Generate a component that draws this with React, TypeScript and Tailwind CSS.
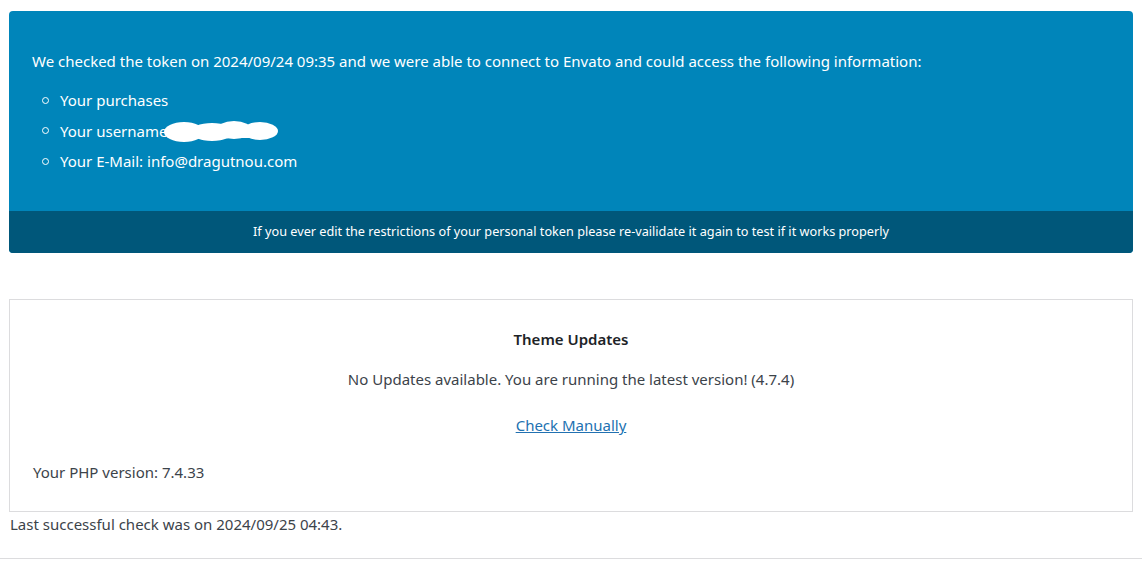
export default function App() {
  return (
    <div
      className="min-h-[565px] bg-white text-[#3c434a]"
      style={{ fontFamily: '"Noto Sans", "Open Sans", sans-serif' }}
    >
      <div className="px-[9px] pt-[11px]">
        <div className="overflow-hidden rounded-[4px] bg-[#0085ba] text-white">
          <div className="px-[23px] pb-[39px] pt-[39px]">
            <p className="text-[15px] leading-[22px]">
              We checked the token on 2024/09/24 09:35 and we were able to connect to Envato and could
              access the following information:
            </p>
            <ul className="mt-[17px] flex flex-col gap-[8.5px] pl-[10px] text-[15px] leading-[22px]">
              <li className="flex items-center gap-[11px]">
                <span className="size-[7px] rounded-full border border-white" />
                Your purchases
              </li>
              <li className="flex items-center gap-[11px]">
                <span className="size-[7px] rounded-full border border-white" />
                <span className="relative">
                  Your username:
                  <svg
                    className="absolute left-[102px] top-[0px]"
                    width="120"
                    height="24"
                    viewBox="0 0 120 24"
                  >
                    <g fill="#fff">
                      <ellipse cx="22" cy="12" rx="20" ry="10" />
                      <ellipse cx="50" cy="12" rx="22" ry="9" />
                      <ellipse cx="72" cy="10" rx="18" ry="9" />
                      <ellipse cx="98" cy="11" rx="18" ry="9" />
                      <rect x="10" y="6" width="96" height="12" />
                    </g>
                  </svg>
                </span>
              </li>
              <li className="flex items-center gap-[11px]">
                <span className="size-[7px] rounded-full border border-white" />
                Your E-Mail: info@dragutnou.com
              </li>
            </ul>
          </div>
          <div className="flex h-[42px] items-center justify-center bg-[#00577a] text-[12.7px]">
            If you ever edit the restrictions of your personal token please re-vailidate it again to
            test if it works properly
          </div>
        </div>
      </div>

      <div className="mx-[9px] mt-[46px] flex h-[213px] flex-col border border-[#dcdcde] px-[23px]">
        <h3 className="mt-[28px] text-center text-[15px] font-semibold leading-[22px] text-[#1d2327]">
          Theme Updates
        </h3>
        <p className="mt-[18px] text-center text-[15px] leading-[22px]">
          No Updates available. You are running the latest version! (4.7.4)
        </p>
        <p className="mt-[24px] text-center text-[15px] leading-[22px]">
          <a href="#" className="text-[#2271b1] underline">
            Check Manually
          </a>
        </p>
        <p className="mt-[25px] text-[15px] leading-[22px]">Your PHP version: 7.4.33</p>
      </div>
      <p className="mt-[1px] px-[10px] text-[15px] leading-[22px]">
        Last successful check was on 2024/09/25 04:43.
      </p>
      <div className="mt-[23px] border-t border-[#dcdcde]" />
    </div>
  );
}
